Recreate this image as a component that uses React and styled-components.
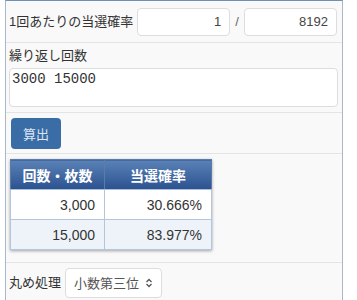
import styled, { createGlobalStyle } from 'styled-components'

const GlobalStyle = createGlobalStyle`
  body {
    margin: 0;
    background: #fff;
    font-family: "Liberation Sans", "Noto Sans CJK JP", sans-serif;
    color: #333;
  }
`

const Panel = styled.div`
  margin-left: 5px;
  width: 336px;
  border: 1px solid #a7b8cb;
  border-top-color: #6f8fb5;
  border-bottom: none;
  background: #f9f9f9;
`

const Row = styled.div`
  box-sizing: border-box;
  height: ${p => p.h}px;
  display: flex;
  flex-direction: ${p => (p.column ? 'column' : 'row')};
  align-items: ${p => (p.column ? 'stretch' : p.top ? 'flex-start' : 'center')};
  gap: ${p => p.gap || 4}px;
  padding: ${p => p.pad || '0 5px 0 3px'};
  border-bottom: 1px solid #e4e4e4;
  font-size: 13px;
`

const Label = styled.span`
  font-size: 13px;
  line-height: 16px;
  color: #333;
  white-space: nowrap;
`

const NumInput = styled.input`
  width: 93px;
  height: 28px;
  box-sizing: border-box;
  border: 1px solid #ddd;
  border-radius: 4px;
  background: #fff;
  text-align: right;
  padding: 0 8px;
  font: 13px "Liberation Sans", sans-serif;
  color: #444;
`

const Slash = styled.span`
  font-size: 13px;
  color: #666;
  padding: 0 1px;
`

const Area = styled.textarea`
  height: 39px;
  box-sizing: border-box;
  border: 1px solid #ddd;
  border-radius: 4px;
  background: #fff;
  padding: 2px 2px;
  font: 14px "Liberation Mono", monospace;
  color: #333;
  resize: none;
`

const Button = styled.button`
  width: 50px;
  height: 31px;
  margin-left: 2px;
  border: none;
  border-radius: 4px;
  background: #3a6ca6;
  color: #dbe6f2;
  font: 13px "Liberation Sans", "Noto Sans CJK JP", sans-serif;
`

const Table = styled.table`
  margin-left: 2px;
  border-collapse: collapse;
  box-shadow: 0 1px 3px rgba(0, 0, 0, 0.35);
  font-size: 14px;

  th {
    box-sizing: border-box;
    height: 30px;
    padding: 0;
    background: linear-gradient(#5a82b6, #2b5290);
    color: #fff;
    font-weight: bold;
    text-align: center;
    border: 1px solid #5b7ca8;
    border-bottom-color: #a9bfdc;
  }

  td {
    box-sizing: border-box;
    height: 30px;
    padding: 0 9px 0 0;
    text-align: right;
    border: 1px solid #b4c6de;
    color: #333;
  }

  tbody tr:nth-child(1) td {
    background: #fff;
  }
  tbody tr:nth-child(2) td {
    background: #eef3fa;
  }
`

const Select = styled.div`
  display: flex;
  align-items: center;
  gap: 6px;
  height: 30px;
  box-sizing: border-box;
  padding: 0 8px;
  border: 1px solid #ddd;
  border-radius: 4px;
  background: #fff;
  font-size: 13px;
  color: #555;
`

const Arrows = () => (
  <svg width="8" height="10" viewBox="0 0 8 10" fill="none" stroke="#555" strokeWidth="1.3">
    <path d="M1.5 4 L4 1.5 L6.5 4" />
    <path d="M1.5 6 L4 8.5 L6.5 6" />
  </svg>
)

const App = () => (
  <>
    <GlobalStyle />
    <Panel>
      <Row h={42}>
        <Label>1回あたりの当選確率</Label>
        <NumInput defaultValue="1" />
        <Slash>/</Slash>
        <NumInput defaultValue="8192" />
      </Row>
      <Row h={70} column gap={4} pad="5px 4px 0 3px">
        <Label>繰り返し回数</Label>
        <Area defaultValue="3000 15000" />
      </Row>
      <Row h={41}>
        <Button>算出</Button>
      </Row>
      <Row h={109} top pad="5px 5px 0 2px">
        <Table>
          <thead>
            <tr>
              <th style={{ width: 94 }}>回数・枚数</th>
              <th style={{ width: 107 }}>当選確率</th>
            </tr>
          </thead>
          <tbody>
            <tr>
              <td>3,000</td>
              <td>30.666%</td>
            </tr>
            <tr>
              <td>15,000</td>
              <td>83.977%</td>
            </tr>
          </tbody>
        </Table>
      </Row>
      <Row h={40} pad="5px 5px 5px 3px">
        <Label>丸め処理</Label>
        <Select>
          小数第三位
          <Arrows />
        </Select>
      </Row>
    </Panel>
  </>
)

export default App
